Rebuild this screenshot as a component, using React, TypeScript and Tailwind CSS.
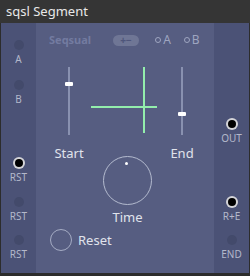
import React from "react";

function Jack({ active, label, className = "" }: { active?: boolean; label: string; className?: string }) {
  return (
    <div className={"flex flex-col items-center " + className}>
      <div className="w-3 h-3 flex items-center justify-center">
        {active ? (
          <div className="w-3 h-3 rounded-full bg-[#d4d4d8] flex items-center justify-center">
            <div className="w-[8px] h-[8px] rounded-full bg-black" />
          </div>
        ) : (
          <div className="w-[10px] h-[10px] rounded-full bg-[#434a6b]" />
        )}
      </div>
      <div className="mt-[3px] h-[10px] leading-[10px] text-[10px] text-[#b3b8cb]">{label}</div>
    </div>
  );
}

function Slider({ pos }: { pos: number }) {
  return (
    <div className="relative w-4 h-[68px] flex justify-center">
      <div className="w-[2px] h-full bg-[#8991b0]" />
      <div
        className="absolute left-[4px] w-[8px] h-[4px] rounded-[1px] bg-white"
        style={{ top: pos }}
      />
    </div>
  );
}

export default function App() {
  return (
    <div
      className="w-[250px] h-[276px] bg-[#2c2c2c] flex flex-col"
      style={{ fontFamily: '"Noto Sans", "Open Sans", sans-serif' }}
    >
      <div className="h-[23px] bg-[#353535] flex items-center pl-[6px] text-[13px] text-[#e8e8e8]">
        sqsl Segment
      </div>
      <div className="mx-[1px] h-[250px] flex">
        {/* left column */}
        <div className="w-[35px] bg-[#4b5276] flex flex-col items-center pt-[16px]">
          <Jack label="A" />
          <Jack label="B" className="mt-[15px]" />
          <Jack label="RST" active className="mt-[53px]" />
          <Jack label="RST" className="mt-[14px]" />
          <Jack label="RST" className="mt-[13px]" />
        </div>
        {/* middle */}
        <div className="w-[178px] bg-[#565d81] flex flex-col">
          <div className="h-[34px] flex items-center pl-[13px]">
            <span className="text-[11px] font-bold text-[#737ba0]">Seqsual</span>
            <span className="ml-[22px] w-[26px] h-[11px] rounded-full bg-[#6f7695] flex items-center justify-center text-[10px] font-bold leading-none text-[#4e557a]">
              +−
            </span>
            <span className="ml-[16px] flex items-center text-[12px] text-[#9ea5c0]">
              <span className="w-[6px] h-[6px] rounded-full border border-[#9ea5c0] mr-[2px]" />A
            </span>
            <span className="ml-[13px] flex items-center text-[12px] text-[#9ea5c0]">
              <span className="w-[6px] h-[6px] rounded-full border border-[#9ea5c0] mr-[2px]" />B
            </span>
          </div>
          <div className="mt-[10px] flex pl-[25px]">
            <div className="w-4 flex flex-col items-center">
              <Slider pos={15} />
              <div className="mt-[10px] text-[13px] leading-4 text-[#e0e3ec] whitespace-nowrap">Start</div>
            </div>
            <div className="ml-[14px] w-[66px] flex flex-col">
              <div className="relative h-[68px]">
                <div className="absolute left-[52px] top-0 w-[2px] h-[66px] bg-[#93eeac]" />
                <div className="absolute left-0 top-[39px] w-[66px] h-[2px] bg-[#93eeac]" />
              </div>
              <div className="mt-[21px] ml-[12px] w-[49px] h-[49px] rounded-full border-[1.5px] border-[#b4bbcf] relative">
                <div className="absolute left-[21px] top-[5px] w-[3px] h-[3px] bg-white rounded-full" />
              </div>
              <div className="mt-[4px] ml-[12px] w-[49px] text-center text-[13px] leading-4 text-[#e0e3ec]">Time</div>
            </div>
            <div className="ml-[17px] w-4 flex flex-col items-center">
              <Slider pos={45} />
              <div className="mt-[10px] text-[13px] leading-4 text-[#e0e3ec] whitespace-nowrap">End</div>
            </div>
          </div>
          <div className="mt-[4px] pl-[14px] flex items-center">
            <div className="w-[22px] h-[22px] rounded-full border-[1.5px] border-[#a5acc4]" />
            <span className="ml-[6px] text-[13px] leading-4 text-[#e0e3ec]">Reset</span>
          </div>
        </div>
        {/* right column */}
        <div className="w-[35px] bg-[#4b5276] flex flex-col items-center pt-[95px]">
          <Jack label="OUT" active />
          <Jack label="R+E" active className="mt-[53px]" />
          <Jack label="END" className="mt-[13px]" />
        </div>
      </div>
    </div>
  );
}
